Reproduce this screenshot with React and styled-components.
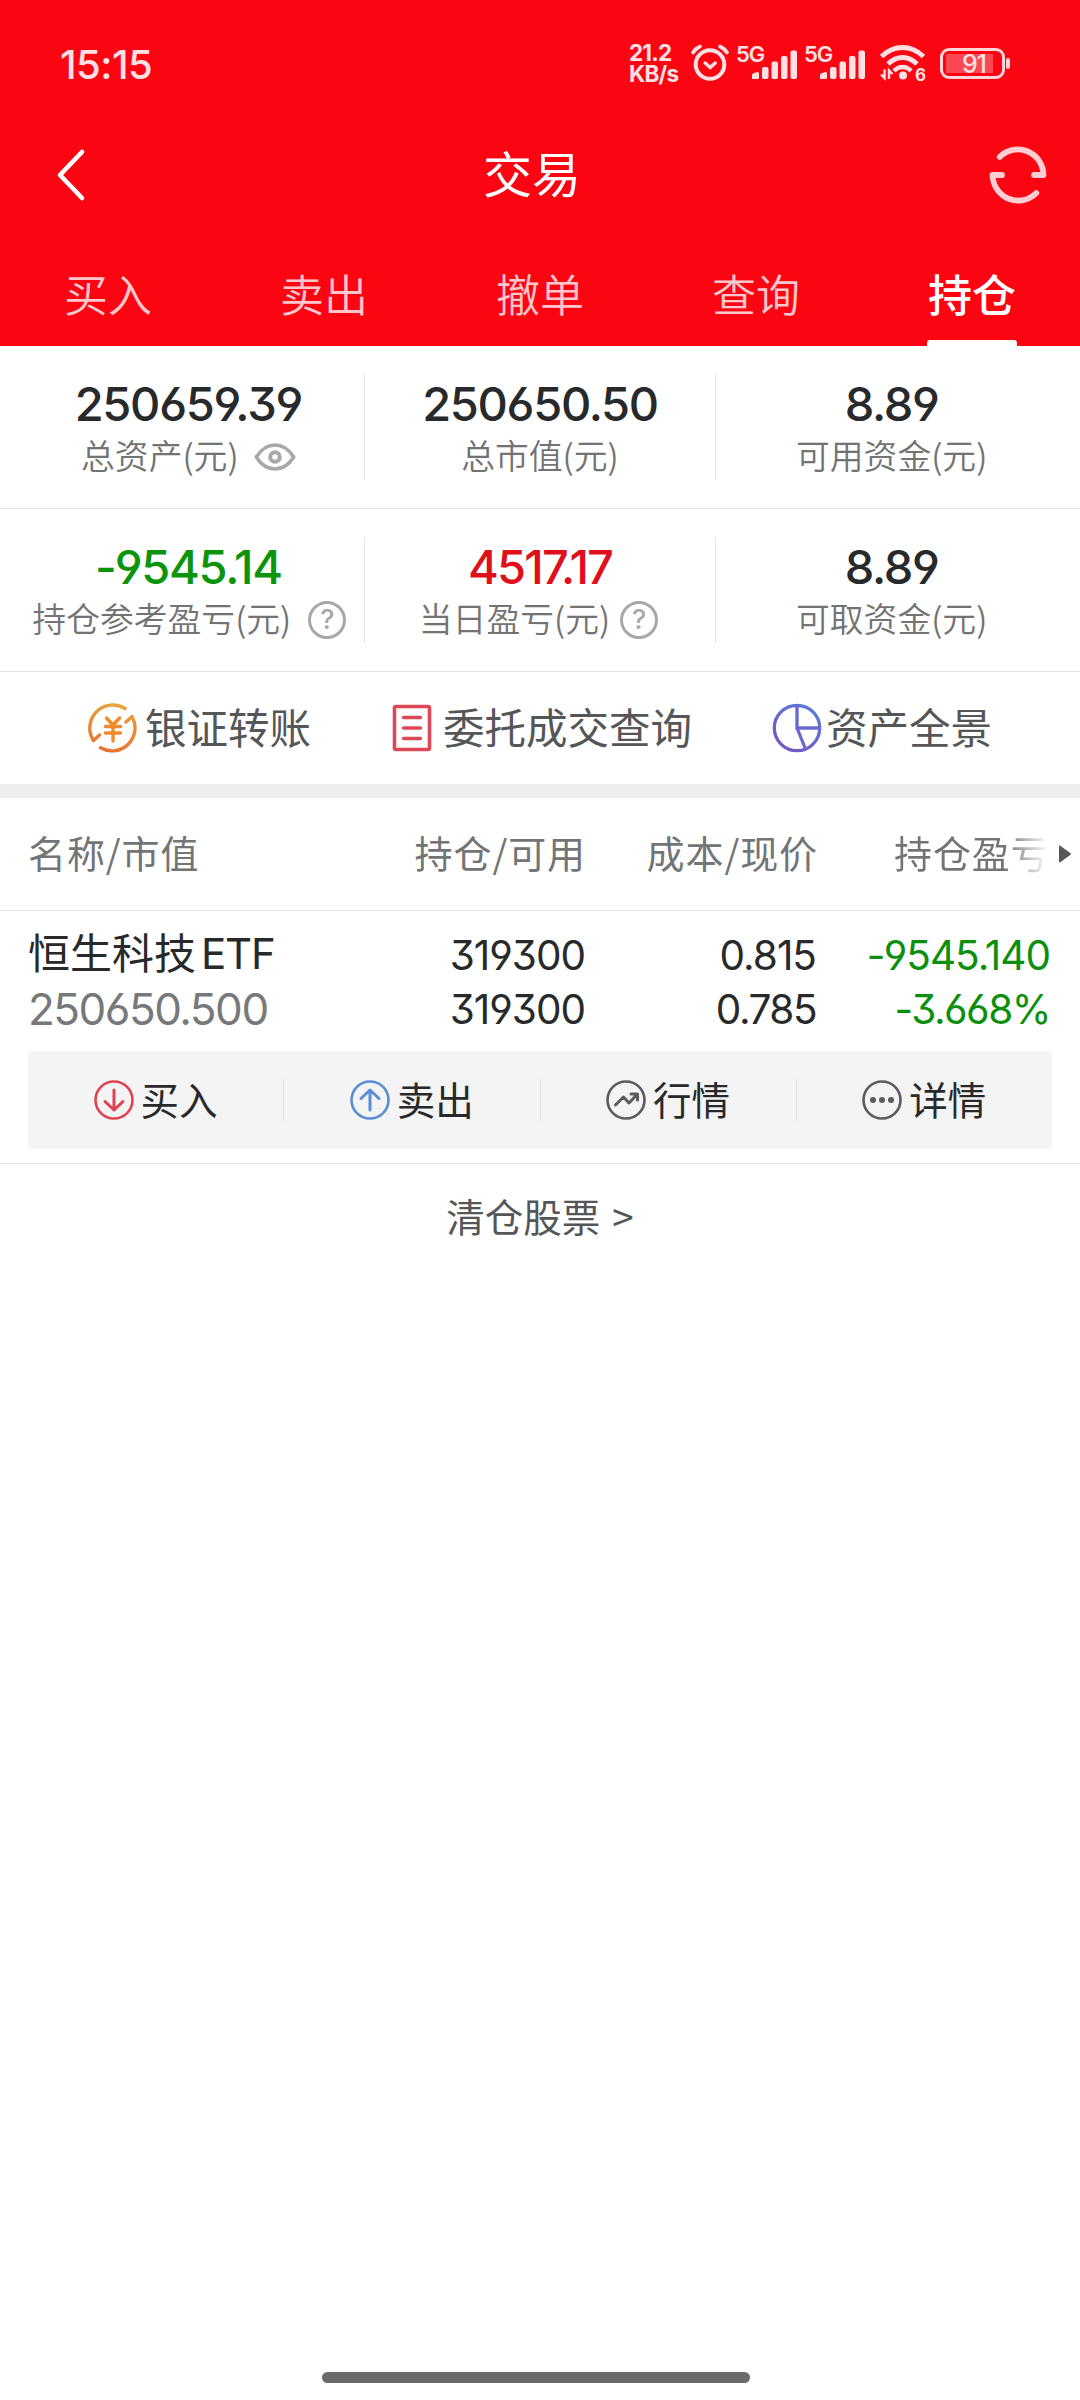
import React from "react";
import styled, { createGlobalStyle } from "styled-components";

const cjk = `"Noto Sans CJK SC", sans-serif`;
const latin = `Inter, "Noto Sans CJK SC", sans-serif`;

const stats = [
    [
        { value: "250659.39", label: "总资产(元)", icon: "eye" },
        { value: "250650.50", label: "总市值(元)" },
        { value: "8.89", label: "可用资金(元)" },
    ],
    [
        { value: "-9545.14", label: "持仓参考盈亏(元)", icon: "help", gap: 17, shift: 2, color: "#0c950c" },
        { value: "4517.17", label: "当日盈亏(元)", icon: "help", gap: 10, shift: -3, color: "#df0f1c", tight: true },
        { value: "8.89", label: "可取资金(元)" },
    ],
];

const tabs = ["买入", "卖出", "撤单", "查询", "持仓"];

function App() {
    return (
        <Page>
            <GlobalStyle />
            <Header>
                <StatusBar />
                <TitleBar>
                    <BackIcon />
                    <Title>交易</Title>
                    <RefreshIcon />
                </TitleBar>
                <Tabs>
                    {tabs.map((tab) => (
                        <Tab key={tab} $active={tab === "持仓"}>
                            {tab}
                        </Tab>
                    ))}
                </Tabs>
            </Header>

            {stats.map((row, i) => (
                <StatRow key={i}>
                    {row.map((item) => (
                        <Stat key={item.label}>
                            <StatValue $color={item.color} $tight={item.tight}>
                                {item.value}
                            </StatValue>
                            <StatLabel $gap={item.gap} $shift={item.shift}>
                                <span>{item.label}</span>
                                {item.icon === "eye" && <EyeIcon />}
                                {item.icon === "help" && <Help>?</Help>}
                            </StatLabel>
                        </Stat>
                    ))}
                </StatRow>
            ))}

            <Links>
                <LinkItem $gap={7}>
                    <TransferIcon />
                    <LinkText>银证转账</LinkText>
                </LinkItem>
                <LinkItem $gap={6} $end={4}>
                    <OrdersIcon />
                    <LinkText>委托成交查询</LinkText>
                </LinkItem>
                <LinkItem $gap={4}>
                    <PieIcon />
                    <LinkText>资产全景</LinkText>
                </LinkItem>
            </Links>
            <Separator />

            <TableHead>
                <HeadCell $left>名称/市值</HeadCell>
                <HeadCell>持仓/可用</HeadCell>
                <HeadCell>成本/现价</HeadCell>
                <FadedCell>持仓盈亏</FadedCell>
                <MoreArrow />
            </TableHead>

            <Holding>
                <HoldingGrid>
                    <Name>
                        恒生科技<NameLatin>ETF</NameLatin>
                    </Name>
                    <Num>319300</Num>
                    <Num>0.815</Num>
                    <Num $green>-9545.140</Num>
                    <MarketValue>250650.500</MarketValue>
                    <Num>319300</Num>
                    <Num $spacing="-1.5px">0.785</Num>
                    <Num $green $spacing="-1.5px">-3.668%</Num>
                </HoldingGrid>
                <Actions>
                    <Action>
                        <ActionIcon color="#e0434f">
                            <path d="M20 10v20M11 21.5l9 8.5 9-8.5" />
                        </ActionIcon>
                        <ActionText>买入</ActionText>
                    </Action>
                    <Action>
                        <ActionIcon color="#5b8cd6">
                            <path d="M20 30V10M11 18.5l9-8.5 9 8.5" />
                        </ActionIcon>
                        <ActionText>卖出</ActionText>
                    </Action>
                    <Action>
                        <ActionIcon color="#5c5c5e">
                            <path d="M9.5 25l8-8 5.5 6 8-8.5M25 14h6.5v6" />
                        </ActionIcon>
                        <ActionText>行情</ActionText>
                    </Action>
                    <Action>
                        <ActionIcon color="#5c5c5e">
                            <g fill="currentColor" stroke="none">
                                <circle cx="11" cy="20" r="3" />
                                <circle cx="20" cy="20" r="3" />
                                <circle cx="29" cy="20" r="3" />
                            </g>
                        </ActionIcon>
                        <ActionText>详情</ActionText>
                    </Action>
                </Actions>
            </Holding>

            <Cleared>
                清仓股票<Gt>&gt;</Gt>
            </Cleared>
            <HomeBar />
        </Page>
    );
}

function StatusBar() {
    return (
        <Status>
            <Clock>15:15</Clock>
            <Speed>
                21.2
                <br />
                KB/s
            </Speed>
            <AlarmIcon />
            <Signal />
            <Signal />
            <WifiIcon />
            <Battery>
                <Level>91</Level>
            </Battery>
            <Nub />
        </Status>
    );
}

function AlarmIcon() {
    return (
        <AlarmSvg width="40" height="38" viewBox="0 0 40 38" fill="none" stroke="#ffe1e4" strokeLinecap="round">
            <circle cx="20" cy="20.5" r="14.3" strokeWidth="4" />
            <path d="M15.2 19l5 4.6 5-4.6" strokeWidth="3.4" strokeLinejoin="round" />
            <path d="M3 8.5q2.5-4 7-6M37 8.5q-2.5-4-7-6" strokeWidth="3.6" />
        </AlarmSvg>
    );
}

function Signal() {
    return (
        <SignalBox>
            <FiveG>5G</FiveG>
            <svg width="46" height="30" viewBox="0 0 46 30" fill="#ffe1e4">
                <path d="M0 29v-4q0-1 1-1.500l4-1.500q2-.5 2 1.500v4q0 1.500-1.500 1.500H1.500Q0 29 0 29z" />
                <rect x="10" y="17" width="6.5" height="12" rx="2" />
                <rect x="19.5" y="11.5" width="6.5" height="17.5" rx="2" />
                <rect x="29" y="6" width="6.5" height="23" rx="2" />
                <rect x="38.5" y="0.5" width="6.5" height="28.5" rx="2" />
            </svg>
        </SignalBox>
    );
}

function WifiIcon() {
    return (
        <Wifi>
            <svg width="48" height="38" viewBox="0 0 48 38" fill="none" stroke="#ffe1e4">
                <path d="M2.5 12.5q9.500-9 21-9t21 9" strokeWidth="4.800" />
                <path d="M9 20q6.500-6.500 14.500-6.500T38 20" strokeWidth="4.800" />
                <path d="M15 27q3.500-4 8.500-4t8.500 4" strokeWidth="4.400" />
                <circle cx="24" cy="31.500" r="4" fill="#ffe1e4" stroke="none" />
                <path d="M5.500 25.500v8.500l-3.500-3.500M10 35v-8.500l3.500 3.500" strokeWidth="2.400" />
            </svg>
            <WifiSix>6</WifiSix>
        </Wifi>
    );
}

function BackIcon() {
    return (
        <svg width="32" height="56" viewBox="0 0 32 56" fill="none" stroke="#fff" strokeWidth="4.6" strokeLinecap="round" strokeLinejoin="round">
            <path d="M26 5L4 28l22 23" />
        </svg>
    );
}

function RefreshIcon() {
    return (
        <svg width="60" height="60" viewBox="0 0 60 60" fill="none" stroke="#ffcdd2" strokeWidth="5.800" strokeLinecap="round" strokeLinejoin="round">
            <path d="M11.700 12A25.700 26.200 0 0 1 55.500 30H46" />
            <path d="M48.300 48A25.700 26.200 0 0 1 4.500 30H14" />
        </svg>
    );
}

function EyeIcon() {
    return (
        <svg width="42" height="28" viewBox="0 0 42 28" fill="none" stroke="#a8a8a8" strokeWidth="3.600">
            <path d="M2.200 14Q10 2 21 2t18.800 12Q32 26 21 26T2.200 14z" strokeLinejoin="round" />
            <circle cx="21" cy="14" r="4.800" strokeWidth="4" />
        </svg>
    );
}

function TransferIcon() {
    return (
        <svg width="50" height="50" viewBox="0 0 50 50" fill="none" stroke="url(#gold)" strokeWidth="3.400" strokeLinecap="round" strokeLinejoin="round">
            <defs>
                <linearGradient id="gold" gradientUnits="userSpaceOnUse" x1="30" y1="0" x2="18" y2="50">
                    <stop offset="0" stopColor="#e9a43c" />
                    <stop offset="1" stopColor="#e8702f" />
                </linearGradient>
            </defs>
            <path d="M37 5.500A23 23 0 0 0 5.500 37.500L11.500 32" />
            <path d="M12.500 44.800A23 23 0 0 0 44 13.500l-6 5.500" />
            <path d="M18.500 15l6.500 7 6.500-7M25 22v16M17.500 23.500h15M17.500 30h15" stroke="#f08a2b" />
        </svg>
    );
}

function OrdersIcon() {
    return (
        <svg width="50" height="50" viewBox="0 0 50 50" fill="none" stroke="#dc4857" strokeWidth="3.600" strokeLinecap="round">
            <rect x="7.500" y="3.500" width="35" height="43" rx="1.500" />
            <path d="M16.500 14.500h17M16.500 25h17M16.500 35.500h17" strokeWidth="3.300" />
        </svg>
    );
}

function PieIcon() {
    return (
        <svg width="50" height="50" viewBox="0 0 50 50" fill="none" stroke="url(#violet)" strokeWidth="3.300">
            <defs>
                <linearGradient id="violet" gradientUnits="userSpaceOnUse" x1="40" y1="4" x2="14" y2="46">
                    <stop offset="0" stopColor="#5a7ad8" />
                    <stop offset="1" stopColor="#7557c8" />
                </linearGradient>
            </defs>
            <circle cx="25" cy="25" r="22.700" />
            <path d="M25 2v23h23M25 25l8.500 21" stroke="#6a68d0" />
        </svg>
    );
}

function MoreArrow() {
    return (
        <svg width="14" height="20" viewBox="0 0 14 20" fill="#555658">
            <path d="M1 2.500Q1 1 2.300 1.800L12.500 9.300Q13.300 10 12.500 10.700L2.300 18.200Q1 19 1 17.500z" />
        </svg>
    );
}

function ActionIcon({ color, children }) {
    return (
        <ActionSvg width="40" height="40" viewBox="0 0 40 40" color={color}>
            <circle cx="20" cy="20" r="18.500" strokeWidth="2.600" />
            {children}
        </ActionSvg>
    );
}

const GlobalStyle = createGlobalStyle`
    body {
        margin: 0;
        background: #fff;
    }

    * {
        box-sizing: border-box;
    }
`;

const Page = styled.div`
    width: 1080px;
    height: 2400px;
    display: flex;
    flex-direction: column;
    background: #fff;
    color: #28292b;
    font-family: ${cjk};
    overflow: hidden;
    white-space: nowrap;

    svg {
        flex: none;
        display: block;
    }
`;

const Header = styled.header`
    height: 346px;
    background: #fb0513;
    color: #fff;
`;

const Status = styled.div`
    display: flex;
    align-items: center;
    height: 126px;
    padding: 0 70px 0 60px;
    color: #ffe1e4;
    font-family: ${latin};
`;

const Clock = styled.div`
    flex: 1;
    margin-top: 2px;
    font-size: 40px;
    font-weight: 500;
    letter-spacing: -0.5px;
`;

const Speed = styled.div`
    width: 61px;
    font-size: 22.5px;
    line-height: 21px;
    font-weight: 700;
    letter-spacing: -0.8px;
`;

const AlarmSvg = styled.svg`
    margin-right: 6px;
`;

const SignalBox = styled.div`
    display: flex;
    align-items: flex-end;
    width: 68px;
    height: 34px;
`;

const FiveG = styled.span`
    align-self: flex-start;
    width: 16px;
    font-size: 22px;
    line-height: 16px;
    font-weight: 600;
    letter-spacing: -1px;
`;

const Wifi = styled.div`
    position: relative;
    margin: 0 13px 0 7px;
`;

const WifiSix = styled.span`
    position: absolute;
    right: 1px;
    bottom: 0;
    padding-left: 1px;
    background: #fb0513;
    font-size: 17px;
    line-height: 14px;
    font-weight: 700;
`;

const Battery = styled.div`
    width: 65px;
    height: 31px;
    padding: 3px;
    border: 3px solid #ffd5d9;
    border-radius: 9px;
`;

const Level = styled.div`
    width: 47px;
    height: 19px;
    background: #fc4855;
    font-size: 25px;
    line-height: 20px;
    font-weight: 500;
    text-align: right;
    padding-right: 7px;
    letter-spacing: -1px;
`;

const Nub = styled.div`
    width: 4px;
    height: 11px;
    margin-left: 1px;
    border-radius: 2px;
    background: #ffd5d9;
`;

const TitleBar = styled.div`
    display: flex;
    align-items: center;
    justify-content: space-between;
    height: 98px;
    padding: 0 32px 0 56px;
`;

const Title = styled.h1`
    margin: -6px 0 0 -12px;
    font-size: 49px;
    line-height: 60px;
    font-weight: 400;
`;

const Tabs = styled.nav`
    display: flex;
    height: 122px;
`;

const Tab = styled.div`
    position: relative;
    flex: 1;
    padding-top: 39px;
    font-size: 44px;
    line-height: 60px;
    font-weight: ${(p) => (p.$active ? 500 : 350)};
    color: ${(p) => (p.$active ? "#fff" : "#ffc6cb")};
    text-align: center;

    &::after {
        content: "";
        display: ${(p) => (p.$active ? "block" : "none")};
        position: absolute;
        left: 63px;
        bottom: 0;
        width: 90px;
        height: 6px;
        border-radius: 3px 3px 0 0;
        background: #fff;
    }
`;

const StatRow = styled.section`
    display: flex;
    height: 163px;
    padding: 28px 13px 0;
    border-bottom: 1px solid #e4e4e4;
`;

const Stat = styled.div`
    flex: 1;
    height: 106px;
    text-align: center;

    & + & {
        border-left: 1px solid #e4e4e4;
    }
`;

const StatValue = styled.div`
    margin-top: 3px;
    height: 55px;
    font-family: ${latin};
    font-feature-settings: "cv03", "cv04", "cv09";
    font-size: 47px;
    line-height: 54px;
    font-weight: 460;
    letter-spacing: ${(p) => (p.$tight ? "-1.8px" : "-1.3px")};
    color: ${(p) => p.$color || "#28292b"};
`;

const StatLabel = styled.div`
    display: flex;
    align-items: center;
    justify-content: center;
    gap: ${(p) => p.$gap || 15}px;
    height: 50px;
    margin-left: ${(p) => p.$shift || 0}px;
    font-size: 33.8px;
    font-weight: 350;
    line-height: 46px;
    color: #737373;

    span:first-child {
        padding-bottom: 4px;
    }
`;

const Help = styled.span`
    flex: none;
    width: 38px;
    height: 38px;
    border: 3.5px solid #a8a8a8;
    border-radius: 50%;
    font-family: ${latin};
    font-size: 27px;
    line-height: 31px;
    font-weight: 500;
    text-align: center;
    color: #a8a8a8;
`;

const Links = styled.section`
    display: flex;
    align-items: center;
    justify-content: space-between;
    height: 112px;
    padding: 0 88px;
`;

const LinkItem = styled.div`
    display: flex;
    align-items: center;
    gap: ${(p) => p.$gap}px;
    padding-right: ${(p) => p.$end || 0}px;
    font-size: 41.5px;
    line-height: 60px;
    color: #555658;
`;

const LinkText = styled.span`
    padding-bottom: 4px;
`;

const Separator = styled.div`
    height: 14px;
    background: #eee;
`;

const TableHead = styled.div`
    display: grid;
    grid-template-columns: 200px 358px 232px 240px 14px;
    align-items: center;
    height: 113px;
    padding-left: 28px;
    border-bottom: 1px solid #e4e4e4;
    font-size: 38px;
    letter-spacing: 0.9px;
    line-height: 56px;
    color: #737476;
`;

const HeadCell = styled.span`
    padding-bottom: 4px;
    text-align: ${(p) => (p.$left ? "left" : "right")};
`;

const FadedCell = styled.span`
    padding: 0 0 4px 76px;
    background: linear-gradient(90deg, #737476 78%, #fff 96%);
    background-clip: text;
    color: transparent;
`;

const Holding = styled.section`
    height: 253px;
    padding: 17px 28px 0;
    border-bottom: 1px solid #e4e4e4;
`;

const HoldingGrid = styled.div`
    display: grid;
    grid-template-columns: 300px 257px 231px 234px;
    grid-template-rows: 54px 54px;
    height: 123px;
`;

const Name = styled.div`
    margin-top: -2px;
    font-size: 42px;
    line-height: 50px;
`;

const NameLatin = styled.span`
    margin-left: 5px;
    font-family: ${latin};
    letter-spacing: -1.2px;
`;

const Num = styled.div`
    font-family: ${latin};
    font-feature-settings: "cv03", "cv04", "cv09";
    font-size: 40.5px;
    font-weight: 380;
    line-height: 55px;
    letter-spacing: ${(p) => p.$spacing || "-1px"};
    text-align: right;
    color: ${(p) => (p.$green ? "#0c8f0c" : "#28292b")};
`;

const MarketValue = styled(Num)`
    font-size: 44px;
    letter-spacing: -1.5px;
    text-align: left;
    color: #77787a;
`;

const Actions = styled.div`
    display: flex;
    align-items: center;
    height: 98px;
    background: #f4f4f4;
`;

const Action = styled.div`
    flex: 1;
    display: flex;
    align-items: center;
    justify-content: center;
    gap: 7px;
    height: 42px;
    font-size: 38.5px;
    line-height: 42px;

    & + & {
        border-left: 1px solid #e2e2e2;
    }
`;

const ActionText = styled.span`
    padding-bottom: 5px;
`;

const ActionSvg = styled.svg`
    fill: none;
    stroke: currentColor;
    stroke-width: 3;
    stroke-linecap: round;
    stroke-linejoin: round;
`;

const Cleared = styled.div`
    padding-top: 23px;
    font-size: 38.5px;
    line-height: 56px;
    text-align: center;
    color: #555658;
`;

const Gt = styled.span`
    margin-left: 12px;
`;

const HomeBar = styled.div`
    width: 428px;
    height: 11px;
    margin: auto 0 17px 322px;
    border-radius: 6px;
    background: #6a6a6a;
`;

export default App;
